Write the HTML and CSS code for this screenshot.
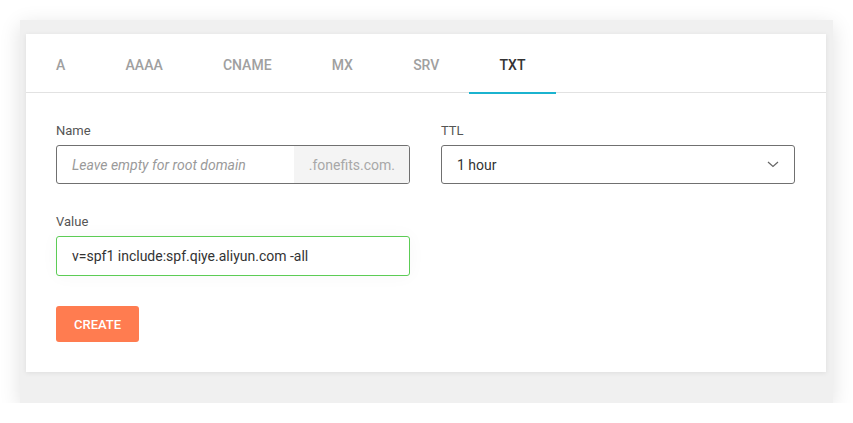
FILE: index.html
```html
<!DOCTYPE html>
<html>
<head>
<meta charset="utf-8">
<link rel="stylesheet" href="styles.css">
</head>
<body>
<div class="panel">
  <div class="card">
    <div class="tabs">
      <div class="tab">A</div>
      <div class="tab">AAAA</div>
      <div class="tab">CNAME</div>
      <div class="tab">MX</div>
      <div class="tab">SRV</div>
      <div class="tab active">TXT</div>
    </div>
    <div class="form">
      <div class="row">
        <div class="field">
          <div class="label">Name</div>
          <div class="input group">
            <span class="placeholder">Leave empty for root domain</span>
            <span class="suffix">.fonefits.com.</span>
          </div>
        </div>
        <div class="field">
          <div class="label">TTL</div>
          <div class="input select">
            <span class="value">1 hour</span>
            <svg class="chevron" width="12" height="7" viewBox="0 0 12 7"><path d="M1 1 L6 5.5 L11 1" fill="none" stroke="#666" stroke-width="1.2"/></svg>
          </div>
        </div>
      </div>
      <div class="row">
        <div class="field">
          <div class="label">Value</div>
          <div class="input valid">
            <span class="value">v=spf1 include:spf.qiye.aliyun.com -all</span>
          </div>
        </div>
        <div class="field"></div>
      </div>
      <div class="actions">
        <button class="btn">CREATE</button>
      </div>
    </div>
  </div>
</div>
</body>
</html>
```
FILE: styles.css
```css
html, body {
  margin: 0;
  padding: 0;
  background: #ffffff;
  font-family: Roboto, "Liberation Sans", sans-serif;
}
.panel {
  margin: 20px 0 0 20px;
  width: 813px;
  height: 383px;
  box-sizing: border-box;
  padding: 14px 7px 31px 6px;
  background: #f0f0f0;
  box-shadow: 0 5px 20px rgba(0, 0, 0, 0.12);
}
.card {
  background: #fff;
  height: 338px;
  box-shadow: 0 1px 5px rgba(0, 0, 0, 0.08);
}
.tabs {
  display: flex;
  height: 58px;
  border-bottom: 1px solid #e2e2e2;
}
.tab {
  position: relative;
  box-sizing: border-box;
  padding: 3px 30.1px 0;
  display: flex;
  align-items: center;
  font-size: 14px;
  font-weight: 500;
  color: #a0a0a0;
}
.tab.active {
  color: #333;
}
.tab.active::after {
  content: "";
  position: absolute;
  left: 0;
  right: 0;
  bottom: -2px;
  height: 2px;
  background: #1bb3cf;
}
.form {
  padding: 30px 31px 30px 30px;
  display: flex;
  flex-direction: column;
  gap: 30px;
}
.row {
  display: grid;
  grid-template-columns: 354px 354px;
  column-gap: 31px;
}
.label {
  font-size: 13px;
  line-height: 15px;
  font-weight: 400;
  color: #555;
  margin-bottom: 7px;
}
.input {
  box-sizing: border-box;
  height: 39px;
  border: 1px solid #707070;
  border-radius: 3px;
  display: flex;
  align-items: center;
  font-size: 14px;
  color: #333;
  overflow: hidden;
}
.input .value {
  padding-left: 15px;
}
.group .placeholder {
  flex: 1;
  padding-left: 15px;
  font-style: italic;
  color: #9a9a9a;
}
.group .suffix {
  align-self: stretch;
  display: flex;
  align-items: center;
  padding: 0 14px 0 15px;
  background: #f4f4f4;
  color: #a8a8a8;
}
.select {
  justify-content: space-between;
}
.chevron {
  margin-right: 15px;
}
.valid {
  height: 40px;
  border-color: #5ccc55;
  box-shadow: 0 0 18px rgba(0, 0, 0, 0.035);
}
.actions {
  display: flex;
}
.btn {
  height: 36px;
  padding: 0 18px;
  border: none;
  border-radius: 3px;
  background: #ff7c50;
  color: #fff;
  font-family: Roboto, "Liberation Sans", sans-serif;
  font-size: 13px;
  font-weight: 500;
}
```
